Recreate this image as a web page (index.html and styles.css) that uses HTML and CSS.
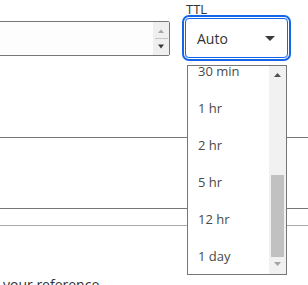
FILE: index.html
```html
<!DOCTYPE html>
<html lang="en">
<head>
<meta charset="utf-8">
<title>TTL select</title>
<link rel="stylesheet" href="styles.css">
</head>
<body>
<div class="page">
  <div class="row">
    <div class="num-field">
      <div class="num-input">
        <svg class="spin" width="16" height="33" viewBox="0 0 16 33">
          <rect x="0" y="0" width="16" height="33" fill="#efefef"/>
          <polygon points="5,11 11,11 8,7.5" fill="#a5a5a5"/>
          <line x1="2" y1="16.5" x2="15" y2="16.5" stroke="#c6c6c6" stroke-width="1"/>
          <polygon points="5,22.5 11,22.5 8,26.5" fill="#3a3a3a"/>
        </svg>
      </div>
    </div>
    <div class="ttl-field">
      <div class="label">TTL</div>
      <div class="select">
        <span class="select-value">Auto</span>
        <svg class="caret" width="10" height="5" viewBox="0 0 10 5"><polygon points="0,0 10,0 5,5" fill="#3b3b3b"/></svg>
      </div>
    </div>
  </div>
  <div class="panel"></div>
  <div class="sep"></div>
  <p class="note">your reference</p>

  <div class="dropdown">
    <div class="options">
      <ul class="option-list">
        <li>30 min</li>
        <li>1 hr</li>
        <li>2 hr</li>
        <li>5 hr</li>
        <li>12 hr</li>
        <li>1 day</li>
      </ul>
    </div>
    <svg class="scrollbar" width="17" height="208" viewBox="0 0 17 208">
      <rect x="0" y="0" width="17" height="208" fill="#f1f1f1"/>
      <polygon points="5,11 12,11 8.5,7" fill="#505050"/>
      <rect x="2" y="109" width="13" height="82" fill="#c1c1c1"/>
      <polygon points="5,196 12,196 8.5,200" fill="#a3a3a3"/>
    </svg>
  </div>
</div>
</body>
</html>
```

FILE: styles.css
```css
html, body {
  margin: 0;
  padding: 0;
  background: #fff;
}

body {
  width: 308px;
  height: 285px;
  overflow: hidden;
  font-family: "Open Sans", "Noto Sans", "Liberation Sans", sans-serif;
  color: #333;
}

.page {
  position: relative;
  width: 308px;
  height: 285px;
  overflow: hidden;
}

.row {
  display: flex;
  align-items: flex-end;
  gap: 15px;
}

.num-field {
  margin-left: -10px;
  width: 180px;
  margin-bottom: 2px;
}

.num-input {
  box-sizing: border-box;
  height: 35px;
  border: 1px solid #767676;
  border-radius: 2px;
  background: #fdfdfd;
  display: flex;
  justify-content: flex-end;
}

.spin {
  display: block;
}

.ttl-field {
  display: flex;
  flex-direction: column;
}

.label {
  height: 18px;
  font-size: 13px;
  line-height: 18px;
  color: #333;
  padding-left: 1px;
}

.select {
  box-sizing: border-box;
  width: 103px;
  height: 40px;
  border: 1px solid #1565e9;
  border-radius: 4px;
  box-shadow: 0 0 0 1px #fff, 0 0 0 3px #1565e9;
  display: flex;
  align-items: center;
  justify-content: space-between;
  padding: 0 12px 0 11px;
  font-size: 14px;
  color: #333;
}

.select-value {
  line-height: 20px;
  padding-top: 2px;
}

.caret {
  display: block;
}

.panel {
  margin-top: 79px;
  height: 70px;
  border-top: 1px solid #767676;
  border-bottom: 1px solid #767676;
}

.sep {
  margin-top: 16px;
  border-top: 1px solid #a9a9a9;
}

.note {
  margin: 49px 0 0 0;
  padding-left: 3px;
  font-size: 14px;
  line-height: 20px;
  color: #333;
}

.dropdown {
  position: absolute;
  left: 187px;
  top: 65px;
  box-sizing: border-box;
  width: 100px;
  height: 210px;
  border: 1px solid #767676;
  background: #fff;
  display: flex;
}

.options {
  flex: 1;
  overflow: hidden;
}

.option-list {
  list-style: none;
  margin: -13px 0 0 0;
  padding: 0;
}

.option-list li {
  height: 37px;
  line-height: 37px;
  padding-left: 10px;
  font-size: 13px;
  color: #4a4a4a;
}

.scrollbar {
  display: block;
  flex: none;
}
```
